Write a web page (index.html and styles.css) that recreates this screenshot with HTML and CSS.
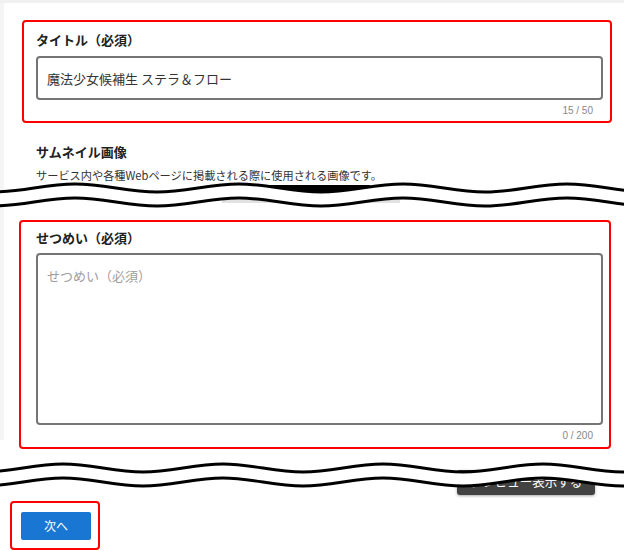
FILE: index.html
```html
<!DOCTYPE html>
<html lang="ja">
<head>
<meta charset="utf-8">
<title>作品情報</title>
<link rel="stylesheet" href="styles.css">
</head>
<body>
<div class="page">
  <section class="box box-title">
    <div class="label">タイトル（必須）</div>
    <input class="text-input" type="text" value="魔法少女候補生 ステラ＆フロー">
    <div class="counter">15 / 50</div>
  </section>

  <section class="thumb">
    <div class="label">サムネイル画像</div>
    <p class="thumb-desc">サービス内や各種Webページに掲載される際に使用される画像です。</p>
    <div class="thumb-strip">
      <div class="thumb-row">
        <div class="thumb-img"></div>
        <div class="thumb-tick"></div>
      </div>
      <div class="thumb-bar"></div>
    </div>
  </section>

  <section class="box box-desc">
    <div class="label">せつめい（必須）</div>
    <textarea class="text-area" placeholder="せつめい（必須）"></textarea>
    <div class="counter">0 / 200</div>
  </section>

  <div class="preview-row">
    <button class="preview-btn" type="button">プレビュー表示する</button>
  </div>

  <div class="box next-box">
    <button class="next-btn" type="button">次へ</button>
  </div>

  <svg class="wave wave-1" width="624" height="34" viewBox="0 0 624 34">
    <defs>
      <path id="w1" fill="none" d="M -89 6 C -59 6, -37 14, -7 14 S 45 6, 75 6 S 127 14, 157 14 S 209 6, 239 6 S 291 14, 321 14 S 373 6, 403 6 S 455 14, 485 14 S 537 6, 567 6 S 619 14, 649 14 S 701 6, 731 6"/>
    </defs>
    <use href="#w1" transform="translate(0,7)" stroke="#fff" stroke-width="14"/>
    <use href="#w1" stroke="#000" stroke-width="3"/>
    <use href="#w1" transform="translate(0,14)" stroke="#000" stroke-width="3"/>
  </svg>

  <svg class="wave wave-2" width="624" height="34" viewBox="0 0 624 34">
    <defs>
      <path id="w2" fill="none" d="M -97 6 C -68 6, -46 14, -17 14 S 34 6, 63 6 S 114 14, 143 14 S 194 6, 223 6 S 274 14, 303 14 S 354 6, 383 6 S 434 14, 463 14 S 514 6, 543 6 S 594 14, 623 14 S 674 6, 703 6"/>
    </defs>
    <use href="#w2" transform="translate(0,7)" stroke="#fff" stroke-width="14"/>
    <use href="#w2" stroke="#000" stroke-width="3"/>
    <use href="#w2" transform="translate(0,14)" stroke="#000" stroke-width="3"/>
  </svg>
</div>
</body>
</html>
```

FILE: styles.css
```css
html, body {
  margin: 0;
  padding: 0;
}

body {
  width: 624px;
  height: 551px;
  overflow: hidden;
  background: #fff;
  font-family: "Noto Sans CJK JP", "Noto Sans", sans-serif;
  color: #333;
}

.page {
  position: relative;
  height: 551px;
  padding-top: 20px;
  box-sizing: border-box;
  background:
    linear-gradient(#f1f1f1, #f1f1f1) 0 0 / 100% 3px no-repeat,
    linear-gradient(#f5f5f5, #f5f5f5) 0 0 / 4px 440px no-repeat,
    #fff;
}

.box {
  border: 2px solid #ff0000;
  border-radius: 4px;
  box-sizing: border-box;
}

.label {
  font-size: 13px;
  font-weight: bold;
  line-height: 18px;
  color: #212121;
}

.box-title {
  margin-left: 22px;
  width: 590px;
  padding: 9px 7px 3px 12px;
}

.box-title .label {
  margin-bottom: 7px;
}

.text-input {
  display: block;
  width: 100%;
  height: 44px;
  margin: 0;
  box-sizing: border-box;
  border: 2px solid #757575;
  border-radius: 4px;
  padding: 0 9px;
  font-family: "Noto Sans CJK JP", sans-serif;
  font-size: 13px;
  color: #333;
  background: #fff;
  outline: none;
}

.counter {
  margin-top: 4px;
  padding-right: 10px;
  text-align: right;
  font-family: "Liberation Sans", Arial, sans-serif;
  font-size: 10px;
  line-height: 14px;
  color: #888;
}

.thumb {
  margin: 20px 0 0 36px;
}

.thumb-desc {
  margin: 6px 0 0;
  font-size: 11.2px;
  line-height: 16px;
  color: #333;
}

.thumb-strip {
  height: 25px;
  margin-left: 186px;
  padding-top: 2px;
}

.thumb-row {
  display: flex;
  align-items: flex-start;
}

.thumb-img {
  width: 148px;
  height: 8px;
  background: #000;
}

.thumb-tick {
  width: 1px;
  height: 9px;
  margin-left: 62px;
  background: #aaa;
}

.thumb-bar {
  width: 178px;
  height: 3px;
  margin-top: 6px;
  background: #e2e2e2;
}

.box-desc {
  margin: 10px 0 0 19px;
  width: 592px;
  padding: 7px 6px 4px 15px;
}

.box-desc .label {
  margin-bottom: 6px;
}

.text-area {
  display: block;
  width: 100%;
  height: 172px;
  margin: 0;
  box-sizing: border-box;
  border: 2px solid #757575;
  border-radius: 4px;
  padding: 12px 9px;
  font-family: "Noto Sans CJK JP", sans-serif;
  font-size: 13px;
  line-height: 18px;
  color: #333;
  resize: none;
  outline: none;
  background: #fff;
}

.text-area::placeholder {
  color: #9e9e9e;
}

.preview-row {
  display: flex;
  justify-content: flex-end;
  margin-top: 21px;
  padding-right: 29px;
}

.preview-btn {
  width: 138px;
  height: 25px;
  border: none;
  border-radius: 3px;
  background: #424242;
  color: #fff;
  font-family: "Noto Sans CJK JP", sans-serif;
  font-size: 12.5px;
  line-height: 24px;
  padding: 0 0 1px;
  box-shadow: 0 1px 3px rgba(0, 0, 0, 0.35);
}

.next-box {
  margin: 6px 0 0 10px;
  width: 90px;
  height: 49px;
  padding: 9px;
}

.next-btn {
  display: block;
  width: 70px;
  height: 28px;
  padding: 0;
  border: none;
  border-radius: 2px;
  background: #1976d2;
  color: #fff;
  font-family: "Noto Sans CJK JP", sans-serif;
  font-size: 12px;
  line-height: 28px;
}

.wave {
  position: absolute;
  left: 0;
  display: block;
}

.wave-1 {
  top: 178px;
}

.wave-2 {
  top: 458px;
}
```
